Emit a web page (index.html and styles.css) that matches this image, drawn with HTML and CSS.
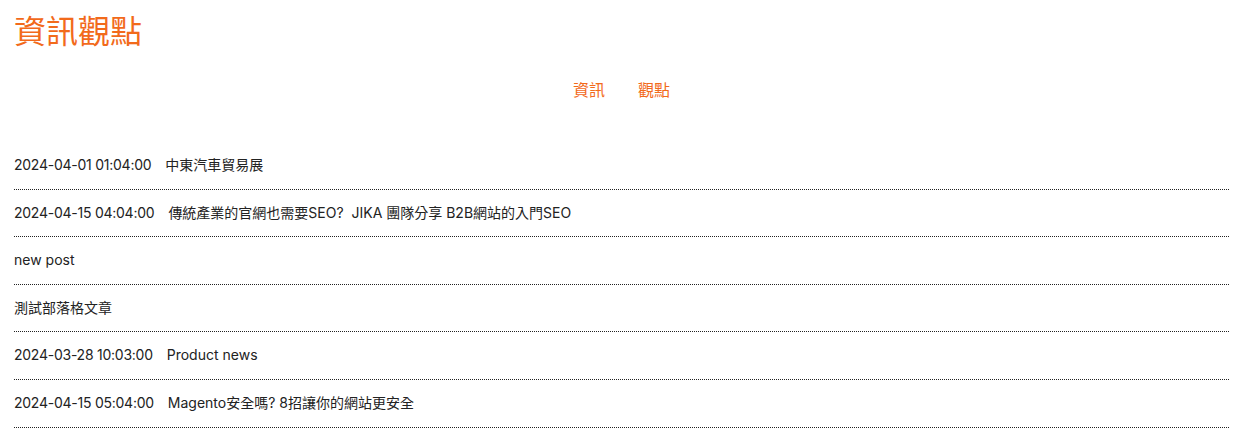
FILE: index.html
```html
<!DOCTYPE html>
<html lang="zh-Hant">
<head>
    <meta charset="UTF-8">
    <meta name="viewport" content="width=device-width, initial-scale=1.0">
    <title>資訊觀點</title>
    <link rel="stylesheet" href="styles.css">
</head>
<body>
    <div class="page">
        <h1 class="pageTitle">資訊觀點</h1>
        <div class="tabs">
            <a class="tab" href="#">資訊</a>
            <a class="tab" href="#">觀點</a>
        </div>
        <ul class="postList">
            <li class="post"><span class="postDate">2024-04-01 01:04:00</span><a class="postTitle" href="#">中東汽車貿易展</a></li>
            <li class="post"><span class="postDate">2024-04-15 04:04:00</span><a class="postTitle" href="#">傳統產業的官網也需要SEO?&nbsp; JIKA 團隊分享 B2B網站的入門SEO</a></li>
            <li class="post"><a class="postTitle" href="#">new post</a></li>
            <li class="post"><a class="postTitle" href="#">測試部落格文章</a></li>
            <li class="post"><span class="postDate">2024-03-28 10:03:00</span><a class="postTitle" href="#">Product news</a></li>
            <li class="post"><span class="postDate">2024-04-15 05:04:00</span><a class="postTitle" href="#">Magento安全嗎? 8招讓你的網站更安全</a></li>
        </ul>
    </div>
</body>
</html>
```

FILE: styles.css
```css
*{margin:0;padding:0;}
body{
    margin:8px;
    font-family:"Inter","Noto Sans CJK TC",sans-serif;
    color:#222;
    background:#fff;
}
a{
    color:inherit;
    text-decoration:none;
}
.page{
    padding:0 0 0 6px;
}
.pageTitle{
    font-size:32px;
    font-weight:normal;
    color:#f26a1b;
    line-height:48px;
}
.tabs{
    display:flex;
    justify-content:center;
    gap:33px;
    margin-top:22px;
}
.tab{
    font-size:16px;
    color:#f26a1b;
    line-height:24px;
}
.postList{
    list-style:none;
    margin-top:40px;
}
.post{
    font-size:14px;
    line-height:20.6px;
    padding:13px 0;
    border-bottom:1px dotted #222;
}
.postDate{
    margin-right:14px;
    letter-spacing:-0.25px;
}
```
